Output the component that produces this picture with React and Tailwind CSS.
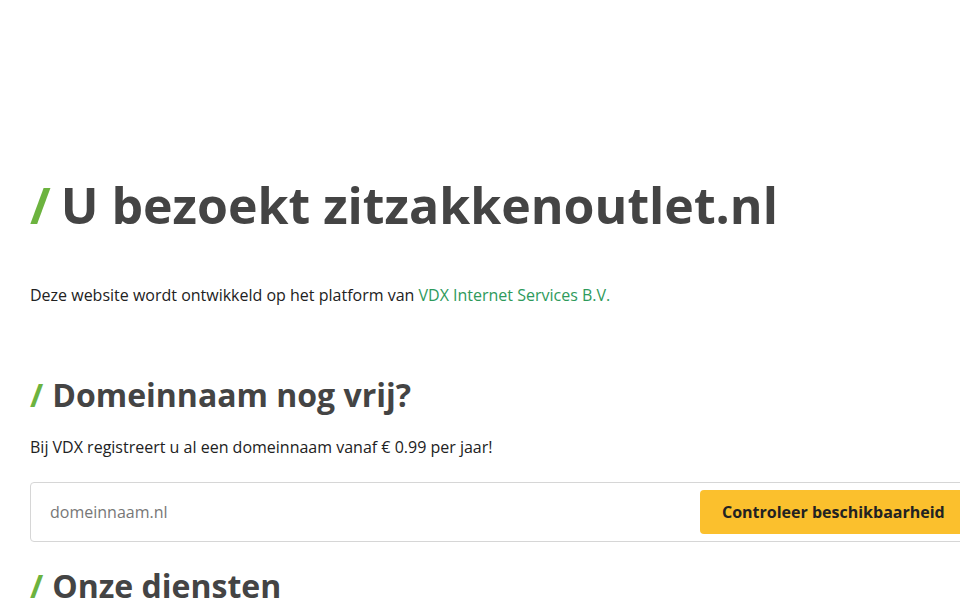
import React from 'react';

const Slash = ({ gap }) => <span className={`text-[#6cb33f] ${gap}`}>/</span>;

export default function App() {
    return (
        <div className="w-[960px] h-[600px] overflow-hidden bg-white" style={{ fontFamily: "'Open Sans', sans-serif" }}>
            <div className="w-[1000px] pl-[30px] pt-[171px]">
                <h1 className="text-[50px] leading-[68px] font-bold text-[#444444]">
                    <Slash gap="mr-[10px]" />U bezoekt zitzakkenoutlet.nl
                </h1>
                <p className="mt-[44px] text-[16px] leading-[24px] text-[#222222]">
                    Deze website wordt ontwikkeld op het platform van{' '}
                    <a href="#" className="text-[#2e9a5b]">VDX Internet Services B.V.</a>
                </p>
                <h2 className="mt-[66px] text-[32px] leading-[44px] font-bold text-[#444444]">
                    <Slash gap="mr-[9px]" />Domeinnaam nog vrij?
                </h2>
                <p className="mt-[18px] text-[16px] leading-[24px] text-[#222222]">
                    Bij VDX registreert u al een domeinnaam vanaf € 0.99 per jaar!
                </p>
                <div className="mt-[23px] w-[945px] h-[60px] border border-[#d6d6d6] rounded flex items-center pr-[6px]">
                    <input
                        className="flex-1 h-full pl-[19px] text-[16px] text-[#555] placeholder:text-[#777] outline-none bg-transparent"
                        placeholder="domeinnaam.nl"
                    />
                    <button className="h-[44px] w-[268px] bg-[#fbc02d] rounded text-[16px] font-bold text-[#222] px-[22px] text-left">
                        Controleer beschikbaarheid
                    </button>
                </div>
                <h2 className="mt-[22px] text-[32px] leading-[44px] font-bold text-[#444444]">
                    <Slash gap="mr-[9px]" />Onze diensten
                </h2>
            </div>
        </div>
    );
}
